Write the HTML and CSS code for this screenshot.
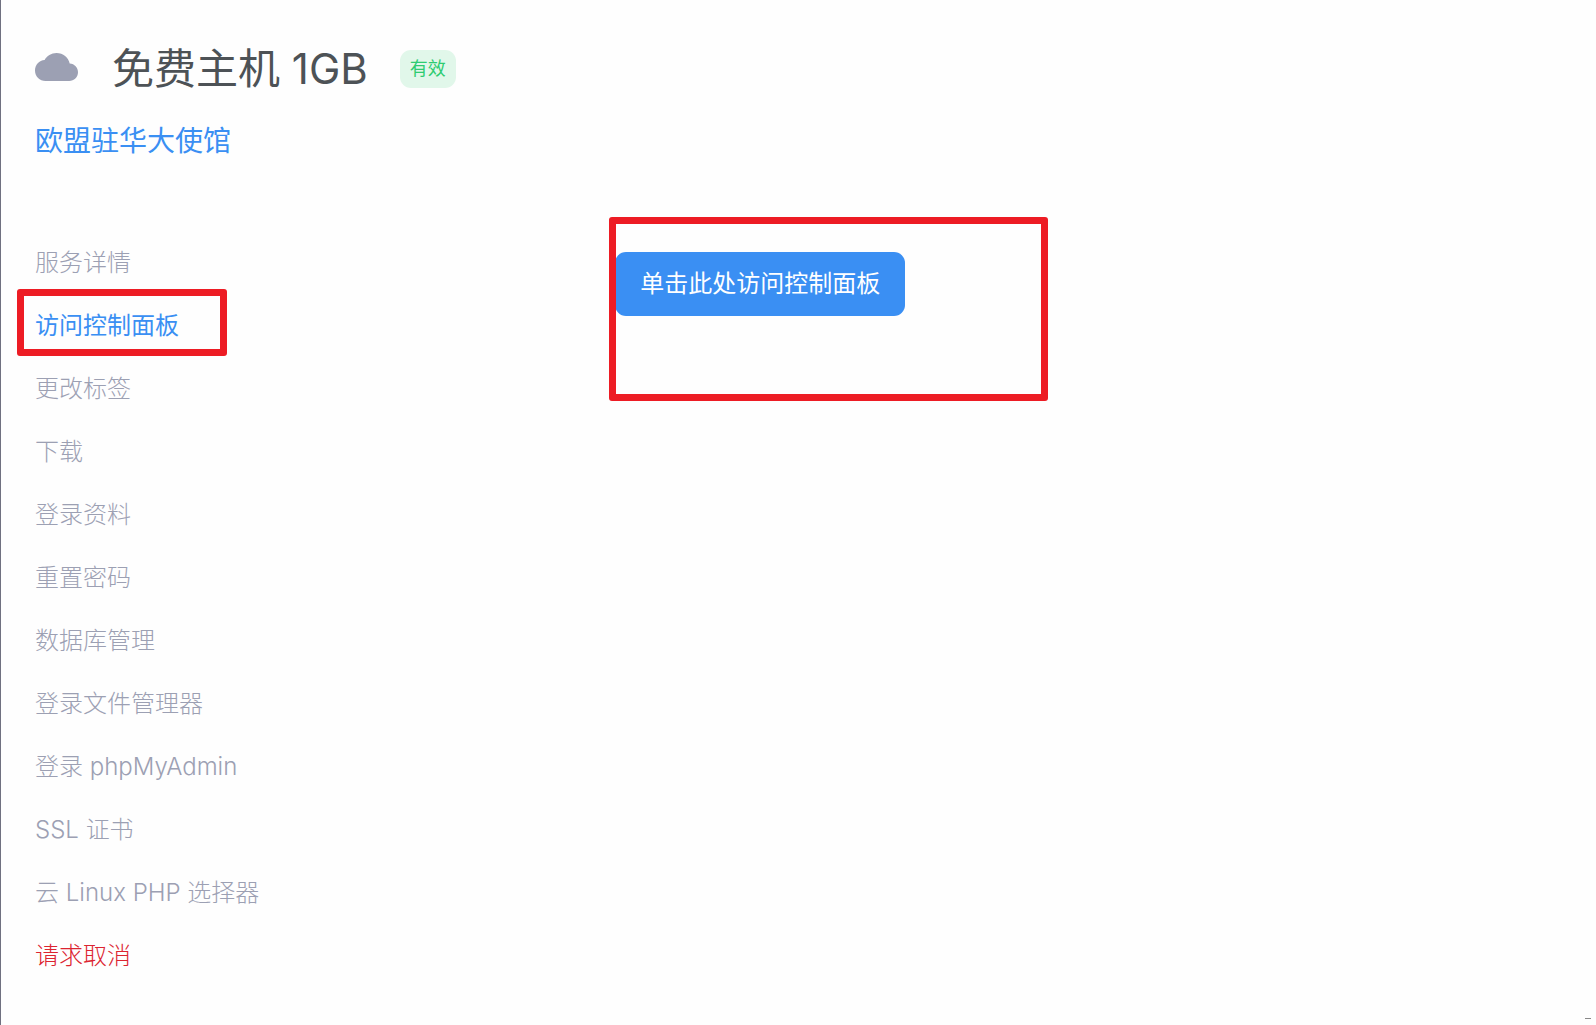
FILE: index.html
```html
<!DOCTYPE html>
<html lang="zh-CN">
<head>
    <meta charset="UTF-8">
    <meta name="viewport" content="width=device-width, initial-scale=1.0">
    <title>免费主机 1GB</title>
    <link rel="stylesheet" href="styles.css">
</head>
<body>
    <div class="page">
        <header class="service-header">
            <div class="service-title">
                <svg class="cloud" viewBox="0 0 43 28" aria-hidden="true">
                    <path d="M10.500 28C4.700 28 0 23.400 0 17.500C0 12 4.200 7.600 9.600 7.100C11.800 2.900 16.300 0 21.500 0C28.200 0 33.400 4.500 34.700 10.500C39.500 10.900 43 14.500 43 19.200C43 24 39 28 34.200 28Z"/>
                </svg>
                <h1>免费主机 1GB</h1>
                <span class="badge">有效</span>
            </div>
            <a class="domain" href="#">欧盟驻华大使馆</a>
        </header>

        <div class="columns">
            <nav>
                <ul class="menu">
                    <li><a href="#">服务详情</a></li>
                    <li class="active"><a href="#">访问控制面板</a></li>
                    <li><a href="#">更改标签</a></li>
                    <li><a href="#">下载</a></li>
                    <li><a href="#">登录资料</a></li>
                    <li><a href="#">重置密码</a></li>
                    <li><a href="#">数据库管理</a></li>
                    <li><a href="#">登录文件管理器</a></li>
                    <li><a href="#">登录 phpMyAdmin</a></li>
                    <li><a href="#">SSL 证书</a></li>
                    <li><a href="#">云 Linux PHP 选择器</a></li>
                    <li class="cancel"><a href="#">请求取消</a></li>
                </ul>
            </nav>
            <main class="panel">
                <button type="button" class="open-panel">单击此处访问控制面板</button>
            </main>
        </div>
    </div>
    <span class="corner-mark"></span>
</body>
</html>
```
FILE: styles.css
```css
*,
*::after {
    box-sizing: border-box;
}
body {
    margin: 0;
    min-height: 100vh;
    background: #fefefe;
    border-left: 1px solid #6f7080;
    font-family: Inter, "Noto Sans CJK SC", sans-serif;
    font-weight: 300;
    color: #4d5256;
}
a {
    color: inherit;
    text-decoration: none;
}
.page {
    padding: 38px 34px 0;
}
.service-title {
    display: flex;
    align-items: center;
    height: 62px;
}
.cloud {
    width: 43px;
    height: 28px;
    margin-bottom: 4px;
    fill: #9ca0b3;
}
h1 {
    margin: 0 32px 0 34px;
    font-size: 42px;
    font-weight: 400;
    line-height: 62px;
}
.badge {
    padding: 0 10px;
    border-radius: 11px;
    background: #e1f7ea;
    color: #2ecc71;
    font-size: 18px;
    font-weight: 400;
    line-height: 38px;
}
.domain {
    display: inline-block;
    margin-top: 21px;
    color: #3a8ff3;
    font-size: 28px;
    font-weight: 400;
    line-height: 40px;
}
.columns {
    display: grid;
    grid-template-columns: 38% 1fr;
    margin-top: 70px;
}
.menu {
    margin: 0;
    padding: 0;
    list-style: none;
    color: #9ca0b3;
    font-size: 24px;
    line-height: 63px;
}
.menu li {
    position: relative;
}
.menu .active {
    color: #3a8ff3;
    font-weight: 400;
}
.menu .cancel {
    color: #dc2430;
}
/* red highlight frames */
.menu .active::after,
.panel::after {
    content: "";
    position: absolute;
    border: 7px solid #ed1c24;
    border-radius: 3px;
    pointer-events: none;
}
.menu .active::after {
    top: -5px;
    left: -18px;
    width: 210px;
    height: 67px;
}
.panel {
    position: relative;
    padding-top: 21px;
}
.panel::after {
    top: -14px;
    left: -6px;
    width: 439px;
    height: 184px;
}
.open-panel {
    padding: 0 25px;
    border: none;
    border-radius: 11px;
    background: #3a8ff3;
    color: #fff;
    font-family: inherit;
    font-size: 24px;
    font-weight: 400;
    line-height: 64px;
    cursor: pointer;
}
.corner-mark {
    position: absolute;
    right: 5px;
    bottom: 6px;
    width: 6px;
    height: 1px;
    background: #888;
}
```
